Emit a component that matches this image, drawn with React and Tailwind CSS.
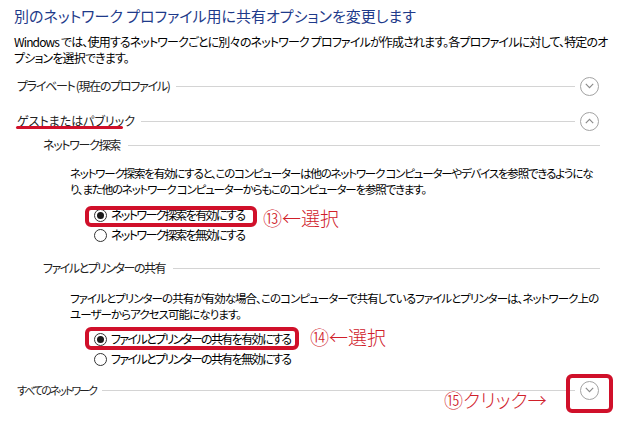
import React from 'react';

const jp = {
    fontFamily: '"Noto Sans CJK JP", "Noto Sans", sans-serif',
};

const Chevron = ({ up = false }) => (
    <div className="w-[19px] h-[19px] rounded-full border border-[#a3a3a3] flex items-center justify-center shrink-0">
        <svg width="9" height="6" viewBox="0 0 9 6" fill="none">
            {up ? (
                <path d="M0.8 5.2 L4.5 1.4 L8.2 5.2" stroke="#8a8a8a" strokeWidth="1.1" />
            ) : (
                <path d="M0.8 0.8 L4.5 4.6 L8.2 0.8" stroke="#8a8a8a" strokeWidth="1.1" />
            )}
        </svg>
    </div>
);

const SectionRow = ({ label, up, track = '', className = '' }) => (
    <div className={`flex items-center h-[20px] pl-[17px] pr-[38px] ${className}`}>
        <span className={`text-[#222] whitespace-nowrap ${track}`}>{label}</span>
        <div className="flex-1 h-px bg-[#d4d4d4] ml-[6px] mr-[5px]"></div>
        <Chevron up={up} />
    </div>
);

const SubHeader = ({ label, track = '', className = '' }) => (
    <div className={`flex items-center h-[16px] pl-[43px] pr-[37px] ${className}`}>
        <span className={`text-[#222] whitespace-nowrap ${track}`}>{label}</span>
        <div className="flex-1 h-px bg-[#d4d4d4] ml-[8px]"></div>
    </div>
);

const Radio = ({ checked, label }) => (
    <div className="flex items-center h-[20px] pl-[94px]">
        <div className="w-[13px] h-[13px] rounded-full border border-[#333] bg-white flex items-center justify-center shrink-0">
            {checked && <div className="w-[7px] h-[7px] rounded-full bg-[#1a1a1a]"></div>}
        </div>
        <span className="ml-[4px] text-black whitespace-nowrap tracking-[-1.6px]">{label}</span>
    </div>
);

export default function App() {
    return (
        <div
            className="relative w-[637px] h-[422px] bg-white overflow-hidden text-[12px] leading-[16px] [font-feature-settings:'palt']"
            style={jp}
        >
            <h1 className="pt-[6px] pl-[14px] text-[15px] leading-[20px] text-[#1e3a8a] whitespace-nowrap">
                別のネットワーク プロファイル用に共有オプションを変更します
            </h1>
            <p className="mt-[8px] pl-[14px] text-black whitespace-nowrap tracking-[-0.85px]">
                Windows では、使用するネットワークごとに別々のネットワーク プロファイルが作成されます。各プロファイルに対して、特定のオ
                <br />
                プションを選択できます。
            </p>

            <SectionRow label="プライベート (現在のプロファイル)" track="tracking-[-1.3px]" className="mt-[10px]" />
            <SectionRow label="ゲストまたはパブリック" up className="mt-[15px]" />

            <SubHeader label="ネットワーク探索" track="tracking-[-1.3px]" className="mt-[6px]" />
            <p className="mt-[12px] pl-[70px] text-[11.5px] text-black whitespace-nowrap tracking-[-1.2px]">
                ネットワーク探索を有効にすると、このコンピューターは他のネットワーク コンピューターやデバイスを参照できるようにな
                <br />
                り、また他のネットワーク コンピューターからもこのコンピューターを参照できます。
            </p>
            <div className="mt-[8px]">
                <Radio checked label="ネットワーク探索を有効にする" />
                <Radio label="ネットワーク探索を無効にする" />
            </div>

            <SubHeader label="ファイルとプリンターの共有" track="tracking-[-1.5px]" className="mt-[15px]" />
            <p className="mt-[14px] pl-[70px] text-[11.5px] text-black whitespace-nowrap tracking-[-0.95px]">
                ファイルとプリンターの共有が有効な場合、このコンピューターで共有しているファイルとプリンターは、ネットワーク上の
                <br />
                ユーザーからアクセス可能になります。
            </p>
            <div className="mt-[7px]">
                <Radio checked label="ファイルとプリンターの共有を有効にする" />
                <Radio label="ファイルとプリンターの共有を無効にする" />
            </div>

            <SectionRow label="すべてのネットワーク" track="text-[11px] tracking-[-2px]" className="mt-[11px]" />

            {/* annotations */}
            <div className="absolute left-[16px] top-[126px] w-[107px] h-[3px] rounded-full bg-[#d0102a]"></div>
            <div className="absolute left-[85px] top-[206px] w-[172px] h-[21px] rounded-[6px] border-[4px] border-[#d0102a]"></div>
            <div className="absolute left-[263px] top-[205px] text-[19px] leading-[26px] text-[#d0202a] whitespace-nowrap font-light">
                ⑬←選択
            </div>
            <div className="absolute left-[85px] top-[327px] w-[214px] h-[23px] rounded-[6px] border-[4px] border-[#d0102a]"></div>
            <div className="absolute left-[310px] top-[324px] text-[19px] leading-[26px] text-[#d0202a] whitespace-nowrap font-light">
                ⑭←選択
            </div>
            <div className="absolute left-[566px] top-[374px] w-[47px] h-[39px] rounded-[6px] border-[4px] border-[#d0102a]"></div>
            <div className="absolute left-[444px] top-[387px] text-[19px] leading-[26px] text-[#d0202a] whitespace-nowrap font-light">
                ⑮クリック→
            </div>
        </div>
    );
}
